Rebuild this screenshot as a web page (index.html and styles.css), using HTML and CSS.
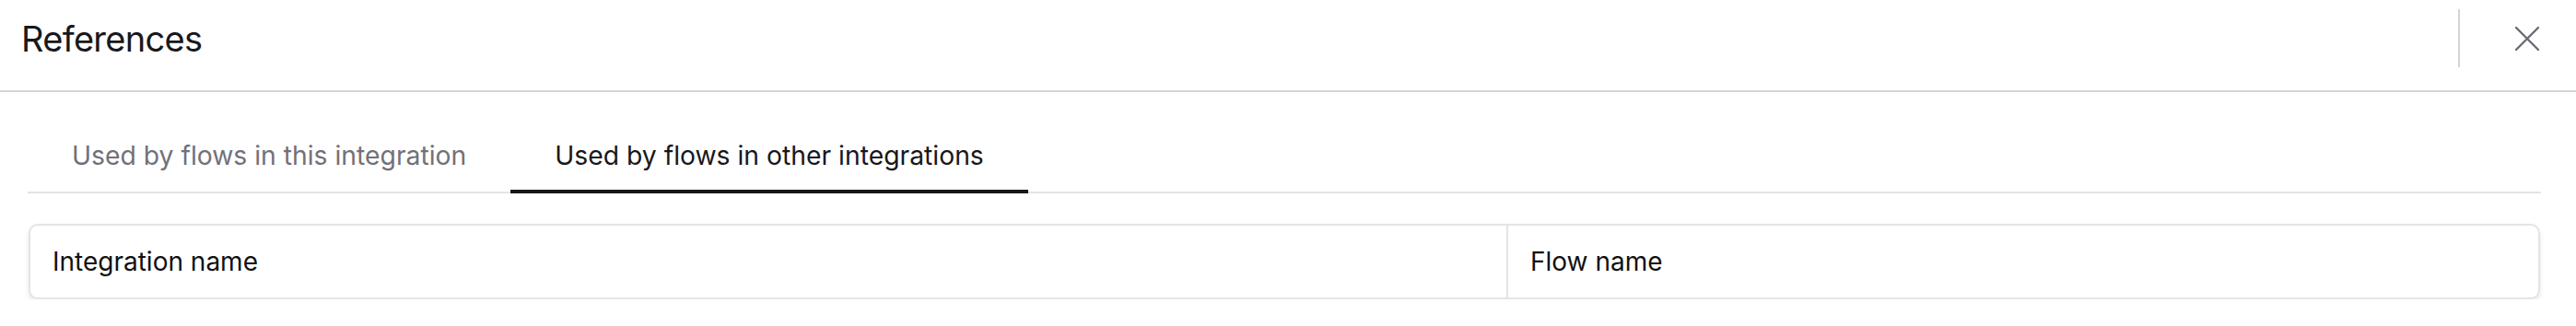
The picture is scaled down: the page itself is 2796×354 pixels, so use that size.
FILE: index.html
```html
<!DOCTYPE html>
<html>
<head>
<meta charset="utf-8">
<link rel="stylesheet" href="styles.css">
</head>
<body>
<div class="dialog">
  <header class="header">
    <h1 class="title">References</h1>
    <div class="actions">
      <span class="divider"></span>
      <button class="close" aria-label="Close">
        <svg width="26" height="26" viewBox="0 0 26 26"><path d="M1 1L25 25M25 1L1 25" stroke="#6b6b73" stroke-width="2.4" stroke-linecap="round"/></svg>
      </button>
    </div>
  </header>
  <main class="body">
    <nav class="tabs">
      <div class="tab">Used by flows in this integration</div>
      <div class="tab active">Used by flows in other integrations</div>
    </nav>
    <div class="table">
      <div class="cell first">Integration name</div>
      <div class="cell">Flow name</div>
    </div>
  </main>
</div>
</body>
</html>
```
FILE: styles.css
```css
html, body {
  margin: 0;
  padding: 0;
  background: #ffffff;
  font-family: Inter, "Noto Sans", sans-serif;
  color: #18181b;
}
.dialog {
  width: 2796px;
}
.header {
  height: 98px;
  border-bottom: 2px solid #d4d4d8;
  display: flex;
  align-items: center;
  justify-content: space-between;
  padding-left: 23px;
  padding-right: 40px;
  box-sizing: content-box;
}
.title {
  margin: 0;
  font-weight: 400;
  font-size: 38px;
  letter-spacing: -0.7px;
  margin-top: -14px;
}
.actions {
  display: flex;
  align-items: flex-start;
  height: 98px;
}
.divider {
  width: 2px;
  height: 63px;
  background: #d4d4d8;
  margin-top: 10px;
  margin-right: 60px;
}
.close {
  background: none;
  border: 0;
  padding: 0;
  margin-top: 29px;
  width: 26px;
  height: 26px;
  display: flex;
}
.body {
  padding: 0 38px 0 30px;
}
.tabs {
  display: flex;
  gap: 0;
  border-bottom: 2px solid #e4e4e7;
  height: 110px;
  align-items: flex-end;
  box-sizing: border-box;
}
.tab {
  font-size: 28.3px;
  color: #71717a;
  padding: 0 48px;
  height: 53px;
  box-sizing: border-box;
  line-height: 1;
}
.tab.active {
  color: #18181b;
  border-bottom: 4px solid #18181b;
  margin-bottom: -2px;
  height: 55px;
}
.table {
  margin-top: 33px;
  margin-left: 1px;
  margin-right: 1px;
  height: 82px;
  border: 2px solid #e4e4e7;
  border-radius: 10px;
  box-shadow: 0 3px 5px rgba(0,0,0,0.1);
  display: grid;
  grid-template-columns: 1604px 1fr;
  box-sizing: border-box;
}
.cell {
  font-size: 28px;
  display: flex;
  align-items: center;
  padding-left: 24px;
  color: #111;
}
.cell.first {
  border-right: 2px solid #e4e4e7;
}
```
